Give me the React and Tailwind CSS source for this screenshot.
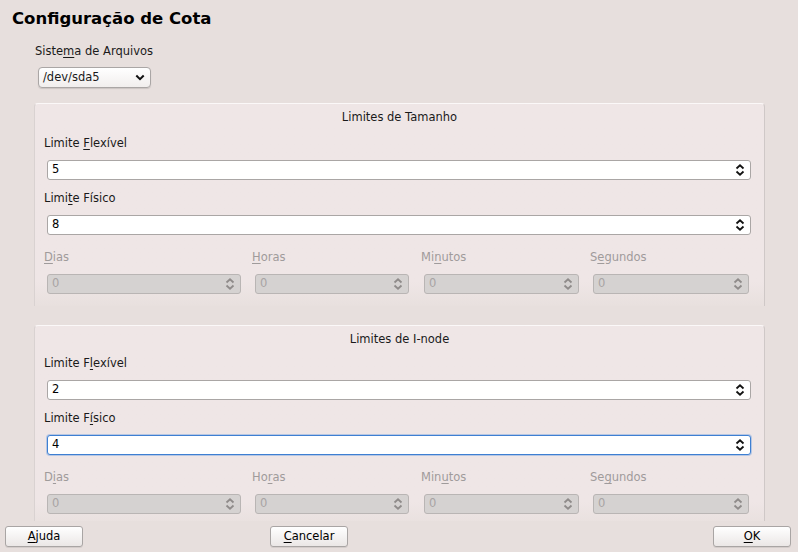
import React from "react";

const font = { fontFamily: '"DejaVu Sans", Verdana, sans-serif' };

function Spin({ disabled }) {
  const c = disabled ? "#8f8b8a" : "#111";
  return (
    <svg width="10" height="12" viewBox="0 0 10 12" className="shrink-0">
      <path d="M1.5 4.5 L5 1.3 L8.5 4.5" fill="none" stroke={c} strokeWidth="1.8" />
      <path d="M1.5 7.5 L5 10.7 L8.5 7.5" fill="none" stroke={c} strokeWidth="1.8" />
    </svg>
  );
}

function U({ children }) {
  return <span className="underline underline-offset-2">{children}</span>;
}

function SpinBox({ value, focused, disabled, className = "" }) {
  let cls =
    "h-[20px] rounded-[3px] flex items-center justify-between pl-[4px] pr-[5px] ";
  if (disabled) cls += "bg-[#d5d2d1] border border-[#b9b5b4] text-[#a8a4a4]";
  else if (focused) cls += "bg-white border border-[#3e7fd2] shadow-[0_0_0_1px_rgba(80,140,220,0.35)] text-black";
  else cls += "bg-white border border-[#aaa6a5] text-black";
  return (
    <div className={cls + " " + className}>
      <span className="leading-none">{value}</span>
      <Spin disabled={disabled} />
    </div>
  );
}

function Group({ title, soft, hard, focusHard, labels, tight }) {
  return (
    <div className="w-[731px] ml-[34px] rounded-t-[4px] border-t border-l border-r border-t-[#fbf8f8] border-l-[#d9d2d1] border-r-[#cfc8c7] bg-gradient-to-b from-[#efe6e6] from-[88%] to-[#e8e0de]">
      <div className="h-[14px] mt-[6px] text-center leading-[14px]">{title}</div>
      <div className={"pl-[9px] h-[14px] leading-[14px] " + (tight ? "mt-[10px]" : "mt-[12px]")}>
        {soft.label}
      </div>
      <SpinBox value={soft.value} className="ml-[12px] mr-[13px] mt-[10px]" />
      <div className="pl-[9px] mt-[11px] h-[14px] leading-[14px]">
        {hard.label}
      </div>
      <SpinBox value={hard.value} focused={focusHard} className="ml-[12px] mr-[13px] mt-[10px]" />
      <div className="flex pl-[9px] mt-[15px] text-[#9f9b9b]">
        {labels.map((l, i) => (
          <div key={i} className={i === 0 ? "w-[208px]" : "w-[169px]"}>
            <div className="h-[14px] leading-[14px]">{l}</div>
            <SpinBox
              value="0"
              disabled
              className={
                "mt-[10px] ml-[3px] " +
                (i === 0 ? "w-[194px]" : i === 1 ? "w-[154px]" : i === 2 ? "w-[155px]" : "w-[156px]")
              }
            />
          </div>
        ))}
      </div>
      <div className="h-[12px]" />
    </div>
  );
}

function Button({ children, className = "" }) {
  return (
    <div
      className={
        "h-[21px] w-[78px] rounded-[3px] border border-[#a9a5a4] bg-gradient-to-b from-[#ffffff] to-[#ebe7e6] flex items-center justify-center text-black shadow-[0_1px_0_rgba(0,0,0,0.08)] " +
        className
      }
    >
      {children}
    </div>
  );
}

export default function App() {
  return (
    <div
      style={font}
      className="w-[798px] h-[552px] bg-[#e7dfdd] text-[11.5px] text-[#1a1a1a] flex flex-col overflow-hidden"
    >
      <div className="h-[521px] overflow-hidden">
        <div className="pl-[12px] pt-[8px] h-[22px] text-[16.5px] leading-[22px] font-bold text-black">
          Configuração de Cota
        </div>
        <div className="pl-[35px] mt-[22px] h-[14px] leading-[14px]">
          Siste<U>m</U>a de Arquivos
        </div>
        <div className="ml-[38px] mt-[9px] w-[113px] h-[21px] rounded-[4px] border border-[#aaa6a5] bg-gradient-to-b from-white to-[#f1eeed] flex items-center justify-between pl-[4px] pr-[5px] shadow-[0_1px_1px_rgba(0,0,0,0.12)]">
          <span>/dev/sda5</span>
          <svg width="10" height="7" viewBox="0 0 10 7">
            <path d="M1.3 1.5 L5 5.2 L8.7 1.5" fill="none" stroke="#111" strokeWidth="2" />
          </svg>
        </div>
        <div className="mt-[15px]">
          <Group
            title="Limites de Tamanho"
            soft={{ label: <>Limite <U>F</U>lexível</>, value: "5" }}
            hard={{ label: <>Limi<U>t</U>e Físico</>, value: "8" }}
            labels={[
              <><U>D</U>ias</>,
              <><U>H</U>oras</>,
              <>Mi<U>n</U>utos</>,
              <>S<U>e</U>gundos</>,
            ]}
          />
        </div>
        <div className="mt-[19px]">
          <Group
            tight
            title="Limites de I-node"
            soft={{ label: <>Limite F<U>l</U>exível</>, value: "2" }}
            hard={{ label: <>Limite F<U>í</U>sico</>, value: "4" }}
            focusHard
            labels={[
              <>D<U>i</U>as</>,
              <>Ho<U>r</U>as</>,
              <>Min<U>u</U>tos</>,
              <>Se<U>g</U>undos</>,
            ]}
          />
        </div>
      </div>
      <div className="flex items-start pl-[5px] pr-[7px] mt-[5px]">
        <Button>
          <span><U>A</U>juda</span>
        </Button>
        <Button className="ml-[187px]">
          <span><U>C</U>ancelar</span>
        </Button>
        <Button className="ml-auto">
          <span><U>O</U>K</span>
        </Button>
      </div>
    </div>
  );
}
